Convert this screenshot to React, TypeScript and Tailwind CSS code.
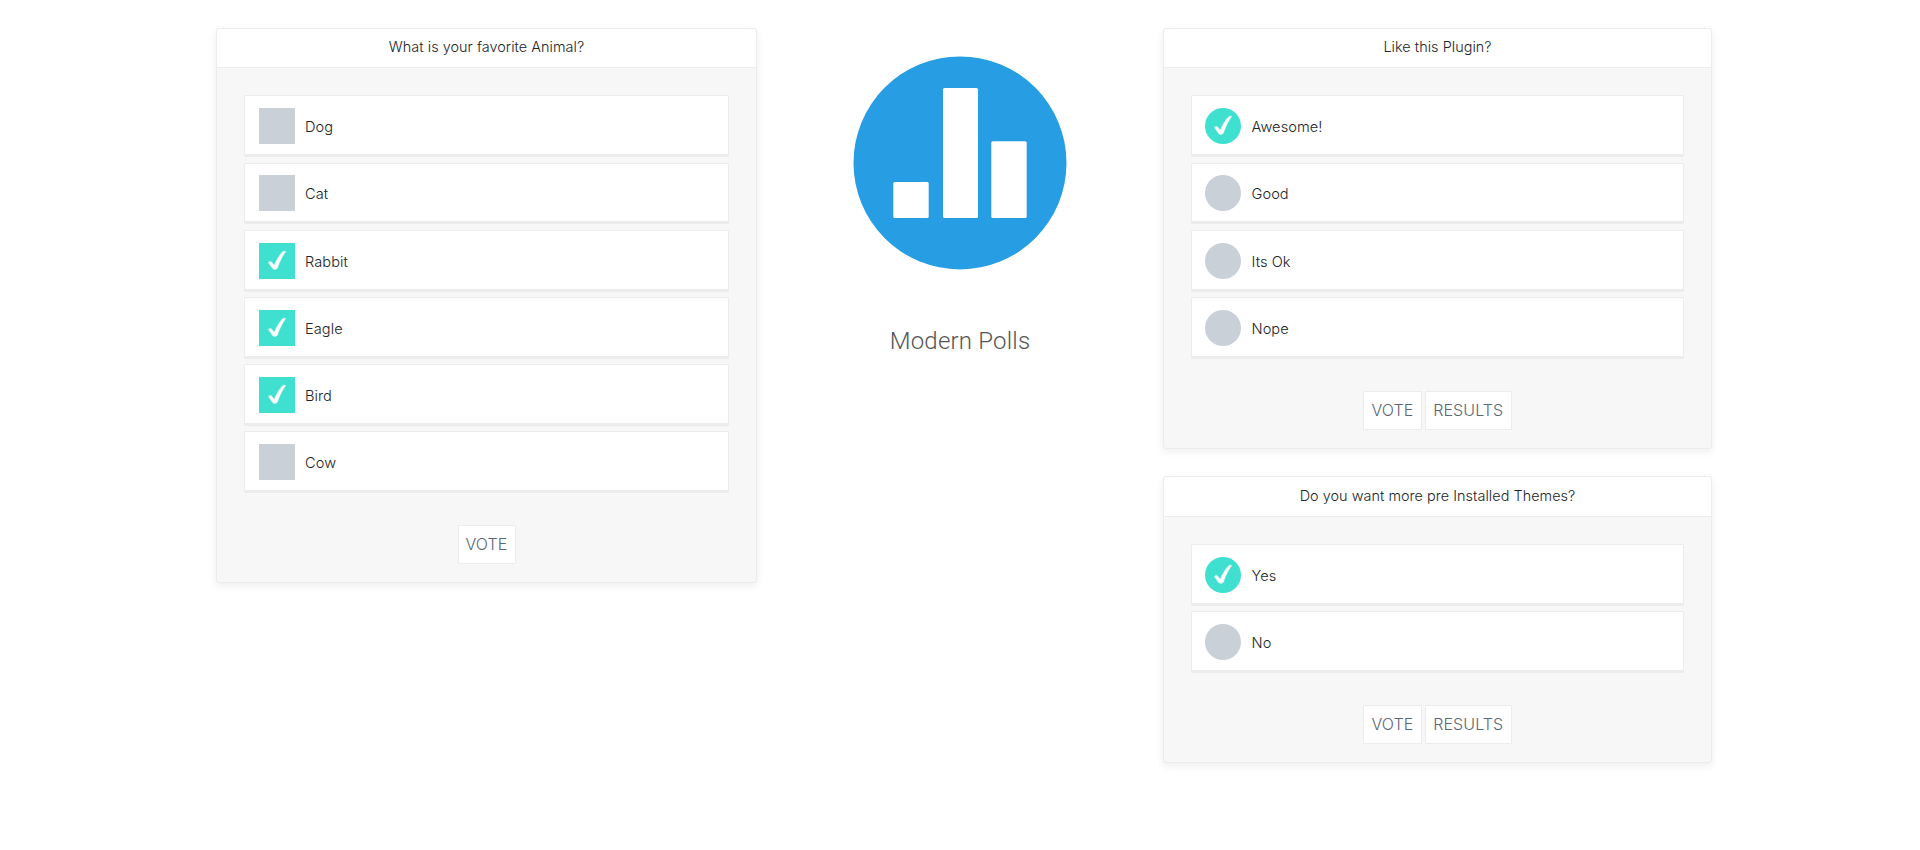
import React from "react";

type Option = { label: string; checked?: boolean };
type PollProps = { question: string; options: Option[]; round?: boolean; buttons: string[] };

function Check() {
  return (
    <svg width="36" height="36" viewBox="0 0 36 36" fill="none">
      <path
        d="M9.4 19.5C10 18.3 11.8 18 12.8 19.2L15.2 22.4C17.6 16.8 20.4 12 23.6 8.8C24.5 8 26 8.1 26.7 8.6C23.4 13 20.8 18.4 18.5 24.8C17.7 26.8 14.9 27 13.6 25.4C12.2 23.6 10.9 21.6 9.4 19.5Z"
        fill="#fff"
        stroke="#fff"
        strokeWidth="0.4"
      />
    </svg>
  );
}

function Poll({ question, options, round = false, buttons }: PollProps) {
  return (
    <section className="rounded-[3px] border border-[#ececef] bg-[#f7f7f7] shadow-[0_3px_8px_rgba(0,0,0,0.07)]">
      <h2 className="flex h-[39.25px] items-center justify-center rounded-t-[3px] border-b border-[#ececef] bg-white pb-[2.5px] text-[14.4px] font-light tracking-[0.05px] text-[#212529]">
        <span>{question}</span>
      </h2>
      <div className="px-[27px] pt-[27px] pb-[18px]">
        <ul className="flex flex-col gap-[7.203125px]">
          {options.map((o) => (
            <li
              key={o.label}
              className={`flex h-[59.90625px] items-start rounded-[1px] border border-[#ececef] bg-white pt-[11.9375px] shadow-[0_2px_0_#ececef] ${round ? "pl-[13px]" : "pl-[14px]"}`}
            >
              <span
                className={`size-9 shrink-0 ${round ? "rounded-full" : ""} ${o.checked ? "bg-[#40e0d0]" : "bg-[#c9d0d8]"}`}
              >
                {o.checked && <Check />}
              </span>
              <span
                className={`pt-2 text-[14.6px] leading-[22px] font-light tracking-[0.07px] text-[#212529] ${round ? "ml-[10.5px]" : "ml-2.5"}`}
              >
                {o.label}
              </span>
            </li>
          ))}
        </ul>
        <div className="mt-[34.203125px] flex justify-center gap-[3px]">
          {buttons.map((b) => (
            <button
              key={b}
              className={`h-[39px] rounded-[1px] border border-[#ececef] bg-white pb-[0.5px] text-base font-light tracking-[0.1px] text-[#5a6875] ${b === "RESULTS" ? "w-[87px]" : buttons.length > 1 ? "w-[58.5px]" : "w-[58px]"}`}
            >
              <span>{b}</span>
            </button>
          ))}
        </div>
      </div>
    </section>
  );
}

function Logo() {
  return (
    <svg width="214" height="214" viewBox="0 0 214 214">
      <circle cx="107" cy="106.9" r="106.5" fill="#279ee4" />
      <rect x="40.3" y="126" width="35.4" height="36" rx="1.5" fill="#fff" />
      <rect x="90" y="32" width="35" height="130" rx="1.5" fill="#fff" />
      <rect x="138.3" y="85.3" width="35.4" height="76.7" rx="1.5" fill="#fff" />
    </svg>
  );
}

export default function App() {
  return (
    <main className="flex h-[850px] w-[1920px] items-start bg-white pt-[28.1875px] pl-[216px] font-['Inter',sans-serif]">
      <div className="w-[541px]">
        <Poll
          question="What is your favorite Animal?"
          options={[
            { label: "Dog" },
            { label: "Cat" },
            { label: "Rabbit", checked: true },
            { label: "Eagle", checked: true },
            { label: "Bird", checked: true },
            { label: "Cow" },
          ]}
          buttons={["VOTE"]}
        />
      </div>
      <div className="flex w-[406px] flex-col items-center pt-[27.8125px]">
        <Logo />
        <h1 className="mt-[52px] font-['Roboto',sans-serif] text-[24px] leading-[38px] font-light tracking-[0.2px] text-[#555]">
          <span>Modern Polls</span>
        </h1>
      </div>
      <div className="flex w-[549px] flex-col gap-[27.5625px]">
        <Poll
          question="Like this Plugin?"
          round
          options={[{ label: "Awesome!", checked: true }, { label: "Good" }, { label: "Its Ok" }, { label: "Nope" }]}
          buttons={["VOTE", "RESULTS"]}
        />
        <Poll
          question="Do you want more pre Installed Themes?"
          round
          options={[{ label: "Yes", checked: true }, { label: "No" }]}
          buttons={["VOTE", "RESULTS"]}
        />
      </div>
    </main>
  );
}
